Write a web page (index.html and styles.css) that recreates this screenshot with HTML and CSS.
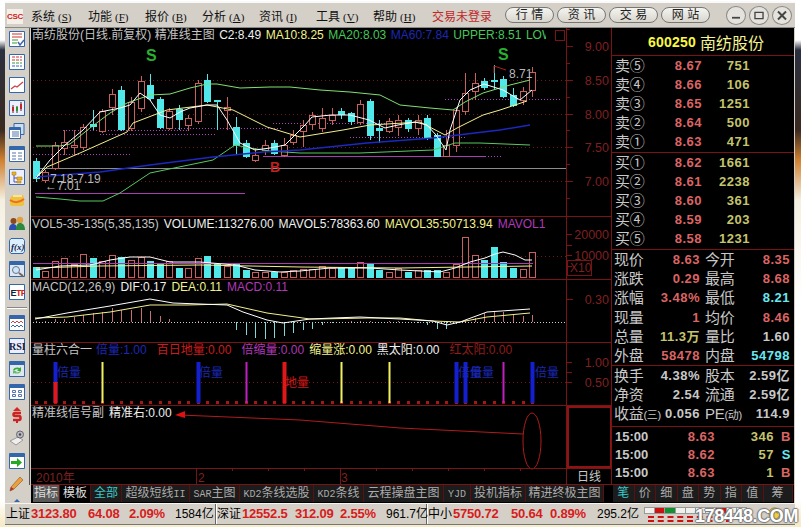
FILE: index.html
```html
<!DOCTYPE html>
<html lang="zh-CN">
<head>
  <meta charset="UTF-8">
  <title>南纺股份</title>
  <link rel="stylesheet" href="styles.css">
</head>
<body>
  <div class="window">

    <!-- Menu bar -->
    <header class="menubar">
      <div class="logo">CSC</div>
      <nav class="menu">
        <a>系统<span class="key">(<u>S</u>)</span></a>
        <a>功能<span class="key">(<u>F</u>)</span></a>
        <a>报价<span class="key">(<u>B</u>)</span></a>
        <a>分析<span class="key">(<u>A</u>)</span></a>
        <a>资讯<span class="key">(<u>I</u>)</span></a>
        <a>工具<span class="key">(<u>V</u>)</span></a>
        <a>帮助<span class="key">(<u>H</u>)</span></a>
      </nav>
      <div class="login">交易未登录</div>
      <div class="pills">
        <button>行 情</button>
        <button>资 讯</button>
        <button>交 易</button>
        <button>网 站</button>
      </div>
      <div class="winbtns">
        <button><svg viewBox="0 0 19 19"><path d="M5 12h9" stroke="#444" stroke-width="2"/></svg></button>
        <button><svg viewBox="0 0 19 19"><path d="M5 6h9v7H5z" fill="none" stroke="#444" stroke-width="1.5"/></svg></button>
        <button><svg viewBox="0 0 19 19"><path d="M5 5l9 9M14 5l-9 9" stroke="#444" stroke-width="2.2"/></svg></button>
      </div>
    </header>

    <div class="main">
      <!-- Left toolbar -->
      <aside class="toolbar">
        <svg class="ico" viewBox="0 0 16 16"><path d="M.5.5h15v15H.5z" fill="#fff" stroke="#36a"/><path d="M3 3h10M3 6h10" stroke="#c33"/><path d="M3 9h6M3 12h5" stroke="#393"/><path d="M9 11l2 3 4-5" fill="none" stroke="#46a" stroke-width="1.5"/></svg>
        <svg class="ico" viewBox="0 0 16 16"><path d="M.5.5h15v15H.5z" fill="#fff" stroke="#36a"/><path d="M3 3h10M3 6h10" stroke="#c33" stroke-dasharray="3 1"/><path d="M3 9h10" stroke="#393" stroke-dasharray="3 1"/><path d="M3 12h10" stroke="#36c" stroke-dasharray="3 1"/></svg>
        <svg class="ico" viewBox="0 0 16 16"><path d="M.5.5h15v15H.5z" fill="#fff" stroke="#36a"/><path d="M2 12l4-3 2 1 6-5" fill="none" stroke="#c44" stroke-width="1.3"/></svg>
        <svg class="ico" viewBox="0 0 16 16"><path d="M.5.5h15v15H.5z" fill="#eef" stroke="#36a"/><path d="M4 5v8M8 6v7M12 2v9" stroke="#333"/><path d="M3 7h2v4H3zM11 4h2v5h-2z" fill="#c22"/><path d="M7 7h2v4H7z" fill="#292"/></svg>
        <svg class="ico" viewBox="0 0 16 16"><path d="M5 .5h10v11H5z" fill="#cde" stroke="#36a"/><path d="M.5 4.5h11v11H.5z" fill="#fff" stroke="#36a"/><path d="M1 5h10v2H1z" fill="#36a"/><path d="M3 9h7M3 11h7M3 13h7" stroke="#57a"/></svg>
        <svg class="ico" viewBox="0 0 16 16"><path d="M.5.5h15v15H.5z" fill="#fff" stroke="#36a"/><path d="M1 1h14v3H1z" fill="#36a"/><path d="M3 7h4M9 7h4M3 10h4M9 10h4M3 13h4M9 13h4" stroke="#57a" stroke-width="1.2"/></svg>
        <svg class="ico" viewBox="0 0 16 16"><path d="M.5.5h15v15H.5z" fill="#eef" stroke="#36a"/><path d="M3 3h4v3H3zM8 8h5v3H8zM8 12h4v2H8z" fill="#e8b820" stroke="#a70" stroke-width=".5"/><path d="M5 6v7h3M5 9h3" fill="none" stroke="#55a"/></svg>
        <svg class="ico" viewBox="0 0 16 16"><path d="M1 6l3-3h10l1 3v7l-2 1H3l-2-1z" fill="#f0c040"/><path d="M1 8c4 3 9 3 14-1" fill="none" stroke="#e87020" stroke-width="2"/><path d="M4 4h9" stroke="#fff2b0" stroke-width="1.5"/></svg>
        <svg class="ico" viewBox="0 0 16 16"><circle cx="4.5" cy="6" r="3" fill="#8a4a20"/><circle cx="11" cy="5" r="3.2" fill="#e0a040"/><path d="M0 15c0-5 2-6 4-6 3 0 4 2 4 6z" fill="#2a4fb0"/><path d="M7 15c0-6 2-7 4-7s5 1 5 7z" fill="#2c8a40"/></svg>
        <svg class="ico" viewBox="0 0 16 16"><path d="M2 .5h12l1.500 2v11l-1.500 2H2L.5 13.500v-11z" fill="#def" stroke="#36a"/><text class="ico-fx" x="2" y="12">f(x)</text></svg>
        <svg class="ico" viewBox="0 0 16 16"><path d="M.5.5h15v15H.5z" fill="#dee8f5" stroke="#36a"/><path d="M1 1h14v3H1z" fill="#36a"/><circle cx="7" cy="9" r="3.500" fill="#cfe6fa" stroke="#678"/><path d="M10 12l4 3" stroke="#765" stroke-width="2"/></svg>
        <svg class="ico" viewBox="0 0 16 16"><path d="M.5.5h15v15H.5z" fill="#fff" stroke="#36a"/><text class="ico-txt" x="1.500" y="12">E<tspan fill="#c22">TF</tspan></text></svg>
        <div class="tool-sep"></div>
        <svg class="ico" viewBox="0 0 16 16"><path d="M.5.5h15v15H.5z" fill="#fff" stroke="#36a"/><path d="M1 1h14v3H1z" fill="#36a"/><path d="M2 8l2-2 2 2 2-2 2 2 2-2 2 2" fill="none" stroke="#c44"/><path d="M2 12l2-2 2 2 2-2 2 2 2-2 2 2" fill="none" stroke="#36a"/></svg>
        <svg class="ico" viewBox="0 0 16 16"><path d="M.5.5h15v15H.5z" fill="#eef" stroke="#36a"/><text class="ico-txt ico-rsi" x="0" y="12">RSI</text></svg>
        <svg class="ico" viewBox="0 0 16 16"><path d="M.5.5h15v15H.5z" fill="#dfe8f2" stroke="#36a"/><path d="M1 1h14v3H1z" fill="#36a"/><path d="M4 9c1-3 5-3 7-2l1-1v4H8l1.500-1.500C8 8 6 8 5 10z" fill="#3a3"/><path d="M12 10c-1 3-5 3-7 2l-1 1V10h4l-1.500 1c1.500.5 3 .5 4.500-1z" fill="#6b6"/></svg>
        <svg class="ico" viewBox="0 0 16 16"><path d="M.5.5h15v15H.5z" fill="#fff" stroke="#36a"/><path d="M1 1h14v3H1z" fill="#36a"/><path d="M3.500 6.500h3v2h-3zM9.500 6.500h3v2h-3zM3.500 10.500h3v2h-3zM9.500 10.500h3v2h-3z" fill="none" stroke="#57a"/></svg>
        <svg class="ico" viewBox="0 0 16 16"><path d="M8 0l4 4H4z" fill="#d22"/><path d="M12 6H6c-2 0-2 3 0 3h4c2 0 2 4 0 4H4" fill="none" stroke="#c22" stroke-width="2.500"/><path d="M8 14v2" stroke="#c22" stroke-width="2"/></svg>
        <svg class="ico" viewBox="0 0 16 16"><path d="M1 11l8-4 5 3-7 5z" fill="#eee" stroke="#999"/><circle cx="11" cy="4.500" r="3.500" fill="#bbb" stroke="#667"/><circle cx="11" cy="4.500" r="1.200" fill="#445"/></svg>
        <svg class="ico" viewBox="0 0 16 16"><path d="M.5.5h15v15H.5z" fill="#fff" stroke="#36a"/><path d="M1 1h14v3H1z" fill="#36a"/><path d="M2 8h6V5l5 4.500L8 14v-3H2z" fill="#2a2"/></svg>
        <svg class="ico" viewBox="0 0 16 16"><path d="M1 15l1-4 9-10 3 3-9 9z" fill="#e8a040" stroke="#a06020" stroke-width=".7"/><path d="M1 15l1-4 3 2z" fill="#a33"/></svg>
        <div class="tool-tip"></div>
      </aside>

      <div class="workspace">
        <div class="panels">
          <!-- Chart panes, the svg under them is filled by script.js -->
          <section class="chart">
            <svg class="plot" id="plot" viewBox="31 28 580 456"></svg>
            <div class="pane pane-main">
              <div class="legend">
                <span class="c-gray">南纺股份(日线.前复权) 精准线主图</span>
                <span class="c-white">C2:8.49</span>
                <span class="c-yellow">MA10:8.25</span>
                <span class="c-green">MA20:8.03</span>
                <span class="c-blue">MA60:7.84</span>
                <span class="c-green">UPPER:8.51</span>
                <span class="c-green">LOWER:7.36</span>
              </div>
            </div>
            <div class="pane">
              <div class="legend">
                <span class="c-gray">VOL5-35-135(5,35,135)</span>
                <span class="c-white">VOLUME:113276.00</span>
                <span class="c-white">MAVOL5:78363.60</span>
                <span class="c-yellow">MAVOL35:50713.94</span>
                <span class="c-purple">MAVOL135:43218.55</span>
              </div>
            </div>
            <div class="pane">
              <div class="legend">
                <span class="c-gray">MACD(12,26,9)</span>
                <span class="c-white">DIF:0.17</span>
                <span class="c-yellow">DEA:0.11</span>
                <span class="c-purple">MACD:0.11</span>
              </div>
            </div>
            <div class="pane">
              <div class="legend legend-wide">
                <span class="c-gray">量柱六合一</span>
                <span class="c-blue">倍量:1.00</span>
                <span class="c-red">百日地量:0.00</span>
                <span class="c-purple">倍缩量:0.00</span>
                <span class="c-yellow">缩量涨:0.00</span>
                <span class="c-white">黑太阳:0.00</span>
                <span class="c-dark">红太阳:0.00</span>
              </div>
            </div>
            <div class="pane">
              <div class="legend">
                <span class="c-gray">精准线信号副</span>
                <span class="c-white">精准右:0.00</span>
              </div>
            </div>
            <div class="pane-dates"></div>
          </section>

          <!-- Quote panel -->
          <section class="quote">
            <div class="q-title"><b>600250</b> <span>南纺股份</span></div>

            <div class="q-block q-book">
              <div class="book-row"><span>卖⑤</span><b class="up">8.67</b><b class="vol">751</b></div>
              <div class="book-row"><span>卖④</span><b class="up">8.66</b><b class="vol">106</b></div>
              <div class="book-row"><span>卖③</span><b class="up">8.65</b><b class="vol">1251</b></div>
              <div class="book-row"><span>卖②</span><b class="up">8.64</b><b class="vol">500</b></div>
              <div class="book-row"><span>卖①</span><b class="up">8.63</b><b class="vol">471</b></div>
            </div>
            <div class="q-block q-book">
              <div class="book-row"><span>买①</span><b class="up">8.62</b><b class="vol">1661</b></div>
              <div class="book-row"><span>买②</span><b class="up">8.61</b><b class="vol">2238</b></div>
              <div class="book-row"><span>买③</span><b class="up">8.60</b><b class="vol">361</b></div>
              <div class="book-row"><span>买④</span><b class="up">8.59</b><b class="vol">203</b></div>
              <div class="book-row"><span>买⑤</span><b class="up">8.58</b><b class="vol">1231</b></div>
            </div>

            <div class="q-block q-stats">
              <div class="stat-row"><span>现价</span><b class="up">8.63</b><span>今开</span><b class="up">8.35</b></div>
              <div class="stat-row"><span>涨跌</span><b class="up">0.29</b><span>最高</span><b class="up">8.68</b></div>
              <div class="stat-row"><span>涨幅</span><b class="up">3.48%</b><span>最低</span><b class="down">8.21</b></div>
              <div class="stat-row"><span>现量</span><b class="up">1</b><span>均价</span><b class="up">8.46</b></div>
              <div class="stat-row"><span>总量</span><b class="vol">11.3万</b><span>量比</span><b class="flat">1.60</b></div>
              <div class="stat-row"><span>外盘</span><b class="up">58478</b><span>内盘</span><b class="down">54798</b></div>
            </div>

            <div class="q-block q-fund">
              <div class="stat-row"><span>换手</span><b class="flat">4.38%</b><span>股本</span><b class="flat">2.59亿</b></div>
              <div class="stat-row"><span>净资</span><b class="flat">2.54</b><span>流通</span><b class="flat">2.59亿</b></div>
              <div class="stat-row"><span>收益<small>(三)</small></span><b class="flat">0.056</b><span>PE<small>(动)</small></span><b class="flat">114.9</b></div>
            </div>

            <div class="q-trades">
              <div class="trade-row"><b class="flat">15:00</b><b class="up">8.63</b><b class="vol">346</b><b class="up">B</b></div>
              <div class="trade-row"><b class="flat">15:00</b><b class="up">8.62</b><b class="vol">57</b><b class="down">S</b></div>
              <div class="trade-row"><b class="flat">15:00</b><b class="up">8.63</b><b class="vol">1</b><b class="up">B</b></div>
            </div>
          </section>
        </div>

        <div class="tabbar">
          <div class="tabs tabs-left">
            <a class="on">指标</a><a class="lit">模板</a><a class="cyan">全部</a><a>超级短线<span class="en">II</span></a><a><span class="en">SAR</span>主图</a><a><span class="en">KD2</span>条线选股</a><a><span class="en">KD2</span>条线</a><a>云程操盘主图</a><a><span class="en">YJD</span></a><a>投机指标</a><a>精进终极主图</a>
          </div>
          <div class="tabs tabs-right">
            <a class="cyan">笔</a><a>价</a><a>细</a><a>盘</a><a>势</a><a>指</a><a>值</a><a>筹</a>
          </div>
        </div>
      </div>
    </div>

    <!-- Status bar -->
    <footer class="statusbar">
      <div class="index idx-sh"><span>上证</span><b>3123.80</b><b>64.08</b><b>2.09%</b><span>1584亿</span></div>
      <div class="index idx-sz"><span>深证</span><b>12552.5</b><b>312.09</b><b>2.55%</b><span>961.7亿</span></div>
      <div class="index idx-zx"><span>中小</span><b>5750.72</b><b>50.64</b><b>0.89%</b><span>295.2亿</span></div>
      <div class="meter">
        <div class="meter-cells"><i></i><i class="r"></i><i class="g"></i><i></i><i></i><i></i><i></i><i class="r"></i><i></i><i></i></div>
        <div class="meter-dash"></div>
      </div>
      <svg class="tray" viewBox="0 0 14 14"><circle cx="7" cy="7" r="6" fill="#f0d040" stroke="#a08010"/><path d="M4 7a3 3 0 0 1 6 0" fill="none" stroke="#806000"/></svg>
      <div class="watermark">178448.COM</div>
    </footer>
  </div>

  <script src="script.js"></script>
</body>
</html>
```

FILE: styles.css
```css
body {
  margin: 0;
  width: 801px;
  height: 527px;
  overflow: hidden;
  background: linear-gradient(to bottom, #fff 0, #fff 40px, #2a3040 50px, #3a2a20 130px, #d08030 160px, #f4f0e0 200px, #fff 300px, #fff 500px, #f6ecc8 523px);
  font-family: "Liberation Sans", "Noto Sans CJK SC", sans-serif;
  font-size: 12px;
  color: #000;
}
.window {
  width: 790px;
  margin: 3px 0 0 5px;
  background: #d4d0c8;
  box-shadow: 0 -2px 0 #fafafa;
}

/* menu bar */
.menubar {
  height: 24px;
  display: flex;
  align-items: center;
  border-bottom: 1px solid #888;
}
.logo {
  width: 16px;
  height: 15px;
  margin: 2px 4px 0 2px;
  background: #f4f0e8;
  color: #d02020;
  font-size: 8px;
  font-weight: bold;
  line-height: 15px;
  text-align: center;
  letter-spacing: -.3px;
}
.menu {
  display: flex;
  width: 401px;
  margin-top: 1px;
  margin-left: 4px;
}
.menu a {
  width: 57px;
  color: #111;
  white-space: nowrap;
}
.key {
  font-family: "Liberation Serif", serif;
  font-size: 11px;
  margin-left: 3px;
}
.login {
  width: 73px;
  color: #c02828;
  margin-top: 1px;
}
.pills {
  display: flex;
  gap: 3px;
  width: 221px;
}
.pills button {
  width: 49px;
  height: 16px;
  padding: 0;
  border: 1px solid #777;
  border-radius: 8px;
  background: linear-gradient(to bottom, #f4f4f0, #d8d5cd);
  font-family: inherit;
  font-size: 12px;
  line-height: 14px;
  color: #222;
}
.winbtns {
  display: flex;
  gap: 3px;
}
.winbtns button {
  width: 20px;
  height: 19px;
  padding: 0;
  border: 1px solid #888;
  border-radius: 50%;
  background: #e4e2dc;
}
.winbtns svg {
  display: block;
  width: 18px;
  height: 17px;
}

.main {
  display: flex;
}

/* left toolbar */
.toolbar {
  width: 25px;
  height: 457px;
  padding-top: 2px;
  box-sizing: border-box;
  border-right: 1px solid #555;
  display: flex;
  flex-direction: column;
  align-items: center;
  gap: 7px;
}
.ico {
  width: 16px;
  height: 16px;
  flex: none;
}
.ico:first-child {
  margin-top: 1px;
}
.ico-fx {
  font-family: "Liberation Serif", serif;
  font-style: italic;
  font-weight: bold;
  font-size: 9px;
  fill: #124;
}
.ico-txt {
  font-size: 9px;
  font-weight: bold;
  fill: #124;
  letter-spacing: -.6px;
}
.ico-rsi {
  font-family: "Liberation Serif", serif;
  font-size: 10px;
  letter-spacing: 0;
}
.tool-sep {
  width: 20px;
  height: 1px;
  background: #888;
  box-shadow: 0 1px 0 #fff;
  flex: none;
}
.tool-tip {
  width: 0;
  height: 0;
  border: 3px solid transparent;
  border-bottom-color: #36a;
  margin-top: -3px;
}

.workspace {
  width: 763px;
  background: #000;
  margin-left: 1px;
}
.panels {
  display: flex;
  height: 456px;
}

/* chart */
.chart {
  position: relative;
  width: 580px;
  border-right: 1px solid #7a1414;
  overflow: hidden;
}
.plot {
  position: absolute;
  left: 0;
  top: 0;
  width: 580px;
  height: 456px;
}
.pane {
  position: relative;
  height: 62px;
  border-bottom: 1px solid #7a1414;
}
.pane-main {
  height: 188px;
}
.pane-main .legend {
  gap: 4.500px;
}
.pane-dates {
  height: 15px;
}
.legend {
  display: flex;
  gap: 5px;
  width: 514px;
  height: 15px;
  padding-left: 1px;
  overflow: hidden;
  white-space: nowrap;
  line-height: 15px;
}
.legend-wide {
  width: 530px;
}
.legend-wide span:nth-child(2) {
  margin-left: -1px;
}
.legend-wide span:nth-child(3),
.legend-wide span:nth-child(4),
.legend-wide span:nth-child(7) {
  margin-left: 5px;
}
.c-gray { color: #c4c4c4; }
.c-white { color: #f0f0f0; }
.c-yellow { color: #f2f28c; }
.c-green { color: #44c858; }
.c-blue { color: #1c28b4; }
.c-purple { color: #b038b8; }
.c-red { color: #cc1c1c; }
.c-dark { color: #901c1c; }

/* things drawn in the svg */
.grid { stroke: #701818; stroke-dasharray: 1 3; }
.frame { stroke: #7a1414; fill: none; }
.frame-hot { stroke: #8c1414; stroke-width: 2; fill: none; }
.tick { stroke: #7a1414; }
.axis-label { fill: #7e2020; font-size: 12.500px; text-anchor: end; }
.date-label { fill: #7e2020; font-size: 12px; }
.day-label { fill: #c8c8c8; font-size: 12px; }
.candle-up { stroke: #c86060; fill: #000; }
.candle-down { stroke: #50e8e8; fill: #50e8e8; }
.wick-up { stroke: #c86060; }
.wick-down { stroke: #50e8e8; }
.l-white { stroke: #fff; fill: none; }
.l-yellow { stroke: #f4f08c; fill: none; }
.l-green { stroke: #58c860; fill: none; }
.l-lime { stroke: #80e070; fill: none; }
.l-blue { stroke: #1c28c0; fill: none; stroke-width: 1.5; }
.l-gray { stroke: #8c8c8c; }
.l-purple { stroke: #a83cb0; }
.l-purple-dot { stroke: #b040c0; stroke-dasharray: 1 2; }
.l-zero { stroke: #ccc; stroke-dasharray: 1 2; }
.macd-up { stroke: #c87070; }
.macd-down { stroke: #80d8d8; }
.mark-s { fill: #28b030; font-size: 16px; font-weight: bold; }
.mark-b { fill: #c02020; font-size: 14px; font-weight: bold; }
.note { fill: #b8b8b8; font-size: 12px; }
.dot { fill: #a01818; }
.sig-blue { fill: #1420d0; }
.sig-red { fill: #e01818; }
.sig-yellow { fill: #f0f060; }
.sig-purple { fill: #c020c0; }
.sig-text-blue { fill: #1c28b0; font-size: 12px; }
.sig-text-red { fill: #d01818; font-size: 12px; }
.arrow-line { stroke: #b01c1c; fill: none; }
.arrow-head { fill: #e01010; }

/* quote panel */
.quote {
  width: 182px;
  color: #c8c8c8;
}
.q-title {
  height: 27px;
  border-bottom: 1px solid #7a1414;
  display: flex;
  justify-content: center;
  align-items: center;
  gap: 4px;
  padding-left: 6px;
  color: #f8f840;
}
.q-title b {
  font-size: 14px;
  letter-spacing: .2px;
}
.q-title span {
  font-size: 16px;
  color: #f4f490;
}
.q-block {
  border-bottom: 1px solid #7a1414;
}
.q-book {
  height: 96px;
}
.book-row {
  display: grid;
  grid-template-columns: 33px 54px 48px;
  height: 19px;
  line-height: 19px;
  padding-left: 3px;
  white-space: nowrap;
}
.book-row span,
.stat-row span {
  font-size: 15px;
  letter-spacing: -.3px;
}
.book-row b,
.stat-row b,
.trade-row b {
  font-size: 13px;
  text-align: right;
  letter-spacing: .5px;
}
.up { color: #dc6464; }
.down { color: #68e8f0; }
.vol { color: #c4c46c; }
.flat { color: #c8c8c8; }
.q-stats {
  height: 115px;
}
.q-fund {
  height: 60px;
}
.stat-row {
  display: grid;
  grid-template-columns: 32px 54px 5px 32px 53px;
  height: 19.200px;
  line-height: 19px;
  padding-left: 2px;
  white-space: nowrap;
}
.stat-row span:nth-of-type(2) {
  grid-column: 4;
}
.stat-row small {
  font-size: 11px;
}
.q-trades {
  padding-top: 1px;
}
.trade-row {
  display: grid;
  grid-template-columns: 36px 64px 59px 17px;
  height: 18px;
  line-height: 18px;
  padding-left: 3px;
  white-space: nowrap;
}
.trade-row b:first-child {
  text-align: left;
  letter-spacing: 0;
}

/* tabs */
.tabbar {
  display: flex;
  height: 18px;
  background: #000;
  border-top: 1px solid #7a1414;
}
.tabs {
  display: grid;
  height: 17px;
  color: #aaa;
}
.tabs-left {
  width: 580px;
  padding-left: 2px;
  grid-template-columns: 27px 31px 31px 68px 50px 74px 50px 80px 27px 55px 78px;
}
.tabs-right {
  width: 181px;
  margin-left: -1px;
  padding-left: 1px;
  grid-template-columns: repeat(7, 21.500px) 29px;
}
.tabs a {
  background: #1c1c1c;
  border-right: 1px solid #5a1010;
  line-height: 17px;
  text-align: center;
  white-space: nowrap;
  overflow: hidden;
}
.tabs .en {
  font-family: "Liberation Mono", monospace;
  font-size: 10px;
}
.tabs .on { background: #585858; color: #ddd; }
.tabs .lit { background: #000; color: #ddd; }
.tabs .cyan { color: #38c8c8; }

/* status bar */
.statusbar {
  position: relative;
  display: flex;
  height: 20px;
  align-items: center;
  border-top: 1px solid #f4f4f0;
  border-bottom: 1px solid #777;
  white-space: nowrap;
  background: #d4d0c8;
}
.index {
  display: grid;
  height: 20px;
  line-height: 20px;
  margin-left: 1px;
  border-right: 1px solid #666;
  box-shadow: 1px 0 0 #fff;
}
.index b {
  color: #d81c1c;
  font-size: 13px;
  letter-spacing: -.2px;
}
.idx-sh { width: 209px; grid-template-columns: 25px 57px 41px 46px 40px; }
.idx-sz { width: 209px; grid-template-columns: 25px 53px 45px 46px 40px; }
.idx-zx { width: 209px; grid-template-columns: 25px 58px 39px 47px 40px; border-right: 0; box-shadow: none; }
.meter {
  width: 102px;
  margin-left: 7px;
}
.meter-cells {
  display: flex;
  height: 7px;
}
.meter-cells i {
  flex: 1;
  background: #f0f0ec;
  border: 1px solid #999;
  margin-right: -1px;
}
.meter-cells .r { background: #d01010; }
.meter-cells .g { background: #109030; }
.meter-dash {
  height: 6px;
  margin: 2px 14px 0 4px;
  border-top: 2px dashed #d01010;
  border-bottom: 2px dashed #d01010;
  box-sizing: border-box;
}
.tray {
  position: absolute;
  right: 14px;
  top: 3px;
  width: 13px;
  height: 13px;
}
.watermark {
  position: absolute;
  right: -3px;
  top: 0;
  font-size: 18px;
  line-height: 24px;
  font-weight: bold;
  letter-spacing: -.4px;
  color: #fff;
  text-shadow: 1px 0 1px #777, -1px 0 1px #777, 0 1px 1px #777, 0 -1px 1px #777;
}
```

FILE: script.js
```js
const plot = document.getElementById('plot');

function add(tag, attrs, text) {
  const el = document.createElementNS('http://www.w3.org/2000/svg', tag);
  for (const k in attrs) el.setAttribute(k, attrs[k]);
  if (text) el.textContent = text;
  plot.appendChild(el);
  return el;
}
function line(x1, y1, x2, y2, cls) {
  add('line', { x1, y1, x2, y2, class: cls });
}
function poly(points, cls) {
  add('polyline', { points: points.map(p => p.join(',')).join(' '), class: cls });
}
function label(x, y, text, cls) {
  add('text', { x, y, class: cls }, text);
}
const barX = i => Math.round(35.5 + i * 9.55);

// candles: body top, body bottom, high, low, u = hollow / d = filled (screen y)
const candles = [
  [161,178,158,182,'d'],[172,180,170,183,'u'],[145,168,142,170,'u'],[142,148,130,155,'u'],[145,147,130,155,'u'],
  [127,147,124,150,'u'],[124,126,110,130,'d'],[111,131,109,133,'u'],[94,107,89,115,'u'],[90,129,86,131,'d'],
  [102,128,97,131,'u'],[81,108,76,112,'u'],[85,98,74,101,'d'],[99,127,97,129,'d'],[111,128,108,130,'u'],
  [109,119,105,130,'d'],[118,125,115,131,'u'],[83,121,80,124,'u'],[80,101,74,103,'d'],[100,101,100,130,'d'],
  [107,110,97,130,'u'],[127,145,117,155,'d'],[143,156,140,158,'d'],[155,160,148,162,'u'],[145,150,140,155,'u'],
  [143,153,140,155,'d'],[145,155,138,157,'u'],[135,142,130,145,'u'],[125,131,120,147,'u'],[115,124,112,130,'u'],
  [118,128,108,132,'u'],[115,120,108,125,'u'],[111,114,108,119,'d'],[113,121,112,125,'d'],[104,122,100,125,'u'],
  [101,135,99,140,'d'],[128,130,120,143,'d'],[121,131,118,133,'u'],[120,127,115,136,'u'],[120,128,118,132,'d'],
  [120,128,115,135,'u'],[118,137,115,140,'d'],[135,156,133,156,'d'],[145,156,130,156,'u'],[110,145,108,152,'u'],
  [93,111,73,115,'u'],[83,91,73,100,'u'],[81,87,78,90,'d'],[80,81,65,90,'d'],[79,96,76,98,'d'],
  [95,105,88,107,'d'],[91,100,87,105,'u'],[72,90,67,97,'u']
];

// volume bar tops and macd heights, one per candle
const volumes = [267,271,261,258,264,254,258,261,255,257,260,257,261,263,261,268,268,258,256,263,
  266,263,270,272,272,272,272,270,269,269,266,268,268,268,262,264,270,272,268,272,
  270,270,270,272,264,237,255,260,247,262,268,269,252];
const macd = [1,1,3,3,5,7,9,10,14,12,12,14,11,6,3,0,0,1,0,0,0,-8,-13,-16,-17,-16,-14,-11,-8,-7,-3,-1,0,1,1,1,0,1,1,0,-1,-3,-7,-7,-2,2,4,9,10,10,8,6,7];

// price grid and axis
[[46,'9.00'],[80,'8.50'],[114,'8.00'],[147,'7.50'],[181,'7.00']].forEach(([y, t]) => {
  if (y > 46) line(33, y + .5, 566, y + .5, 'grid');
  line(566, y + .5, 573, y + .5, 'tick');
  label(609, y + 5, t, 'axis-label');
});
[29,63,97,130,164,198].forEach(y => line(566, y + .5, 570, y + .5, 'tick'));

// flat levels
line(33, 168.5, 566, 168.5, 'l-gray');
line(35, 193.5, 245, 193.5, 'l-purple');
line(263, 156.500, 485, 156.500, 'l-purple');
line(485, 156.500, 503, 156.500, 'l-purple-dot');
[[33,130,154],[100,217,134],[63,187,130],[350,467,137],[445,560,99],[160,283,128],[273,397,123]].forEach(([a, b, y]) => {
  line(a, y + .5, b, y + .5, 'l-purple-dot');
});

// candles
candles.forEach((c, i) => {
  const x = barX(i) + .5;
  line(x, c[2], x, c[3], c[4] === 'u' ? 'wick-up' : 'wick-down');
  add('rect', { x: x - 3, y: c[0] + .5, width: 6, height: Math.max(c[1] - c[0], 1), class: c[4] === 'u' ? 'candle-up' : 'candle-down' });
});

// moving averages and bands
poly([[36,197],[60,199],[80,201],[103,201],[120,193],[150,173],[213,160],[235,145],[250,148],[270,151],[300,153],[360,153],[433,150],[455,143],[480,143],[530,145]], 'l-green');
poly([[36,146],[60,146],[70,144],[90,128],[110,113],[127,103],[150,95],[170,94],[190,88],[207,84],[217,84],[240,88],[270,87],[290,87],[320,90],[350,92],[380,95],[400,105],[430,108],[453,110],[465,102],[483,93],[510,85],[530,80]], 'l-lime');
poly([[36,177],[100,172],[150,165],[213,157],[263,152],[300,150],[367,143],[433,138],[500,130],[530,125]], 'l-blue');
poly([[36,178],[47,167],[80,153],[127,132],[133,123],[167,110],[207,105],[233,110],[267,127],[300,137],[343,130],[370,125],[420,122],[445,135],[457,128],[483,115],[500,110],[527,101]], 'l-yellow');
poly([[36,178],[50,160],[65,145],[83,130],[100,112],[120,108],[130,105],[140,93],[150,100],[160,115],[170,118],[180,112],[190,108],[207,105],[217,105],[227,120],[240,143],[255,150],[270,148],[285,145],[295,135],[305,125],[312,117],[331,115],[350,115],[369,120],[385,128],[398,125],[415,122],[427,125],[436,135],[446,150],[450,130],[460,100],[470,90],[484,84],[503,90],[520,100],[532,90]], 'l-white');

// notes on the price pane
label(146, 61, 'S', 'mark-s');
label(498, 60, 'S', 'mark-s');
label(270, 172, 'B', 'mark-b');
label(50, 183, '7.18-7.19', 'note');
label(45, 190, '←7.01', 'note');
label(509, 78, '8.71', 'note');
poly([[494,73],[494,66],[506,70]], 'arrow-line l-gray');
add('rect', { x: 555.5, y: 30.5, width: 9, height: 10, class: 'frame' });

// volume pane
line(33, 256.500, 566, 256.500, 'grid');
volumes.forEach((top, i) => {
  const x = barX(i);
  const up = candles[i][4] === 'u';
  add('rect', { x: x - 3 + .5, y: top + .5, width: 6, height: 277 - top, class: up ? 'candle-up' : 'candle-down' });
});
line(33, 263.500, 533, 263.500, 'l-purple');
poly([[36,268],[100,266],[200,265],[300,267],[400,268],[532,266]], 'l-yellow');
poly([[36,270],[48,268],[60,266],[90,265],[110,260],[130,257],[150,257],[170,262],[200,262],[235,265],[255,270],[280,272],[300,271],[330,268],[370,268],[400,270],[440,272],[455,268],[470,262],[485,258],[495,254],[503,252],[515,255],[525,260],[532,260]], 'l-white');
label(609, 239, '20000', 'axis-label');
label(609, 260, '10000', 'axis-label');
[234,245,255,266].forEach(y => line(566, y + .5, 572, y + .5, 'tick'));
add('rect', { x: 567.500, y: 260.500, width: 24, height: 15, class: 'frame' });
label(570, 272, 'X10', 'date-label');

// macd pane
line(33, 322.500, 566, 322.500, 'l-zero');
macd.forEach((h, i) => {
  if (h) line(barX(i) + .5, 322, barX(i) + .5, 322 - h, h > 0 ? 'macd-up' : 'macd-down');
});
poly([[35,318],[67,317],[110,312],[150,305],[187,305],[227,304],[267,313],[310,319],[317,319],[367,318],[400,318],[433,321],[460,322],[487,317],[530,313]], 'l-yellow');
poly([[35,319],[67,313],[110,306],[150,299],[173,303],[227,305],[243,312],[267,320],[283,323],[310,319],[333,318],[360,317],[400,319],[433,321],[447,325],[460,322],[487,312],[530,309]], 'l-white');
label(609, 304, '0.30', 'axis-label');
line(566, 299.500, 573, 299.500, 'tick');

// six in one volume pane
line(33, 382.500, 566, 382.500, 'grid');
candles.forEach((c, i) => add('rect', { x: barX(i) - 1, y: 401, width: 3, height: 3, class: 'dot' }));
[[2,'sig-blue',4],[7,'sig-yellow',2],[17,'sig-blue',4],[22,'sig-purple',2],[26,'sig-red',4],[32,'sig-yellow',2],[37,'sig-yellow',2],[44,'sig-blue',4],[45,'sig-blue',4],[49,'sig-purple',2],[52,'sig-blue',4]].forEach(([i, cls, w]) => {
  add('rect', { x: barX(i) - w / 2 + .5, y: 362, width: w, height: 41, class: cls });
});
add('rect', { x: barX(2) - 1.500, y: 382, width: 4, height: 21, class: 'sig-red' });
label(57, 377, '倍量', 'sig-text-blue');
label(199, 377, '倍量', 'sig-text-blue');
label(285, 387, '地量', 'sig-text-red');
label(458, 377, '倍量', 'sig-text-blue');
label(470, 377, '倍量', 'sig-text-blue');
label(535, 377, '倍量', 'sig-text-blue');
label(609, 367, '1.00', 'axis-label');
label(609, 387, '0.50', 'axis-label');
[362,372,382].forEach(y => line(566, y + .5, 572, y + .5, 'tick'));

// signal pane
add('ellipse', { cx: 532, cy: 441, rx: 9, ry: 28, class: 'arrow-line' });
poly([[180,415],[300,420],[400,428],[523,434]], 'arrow-line');
add('path', { d: 'M175 415l10-4v7z', class: 'arrow-head' });
add('rect', { x: 568, y: 407, width: 43, height: 60, class: 'frame-hot' });

// dates and frame
line(566.500, 28, 566.500, 484, 'frame');
label(36, 482, '2010年', 'date-label');
label(198, 482, '2', 'date-label');
label(341, 482, '3', 'date-label');
label(577, 481, '日线', 'day-label');
[196,340].forEach(x => line(x + .5, 468, x + .5, 484, 'frame'));
[232,268,304,376,412,448,484,520].forEach(x => line(x + .5, 468, x + .5, 471, 'tick'));
```
